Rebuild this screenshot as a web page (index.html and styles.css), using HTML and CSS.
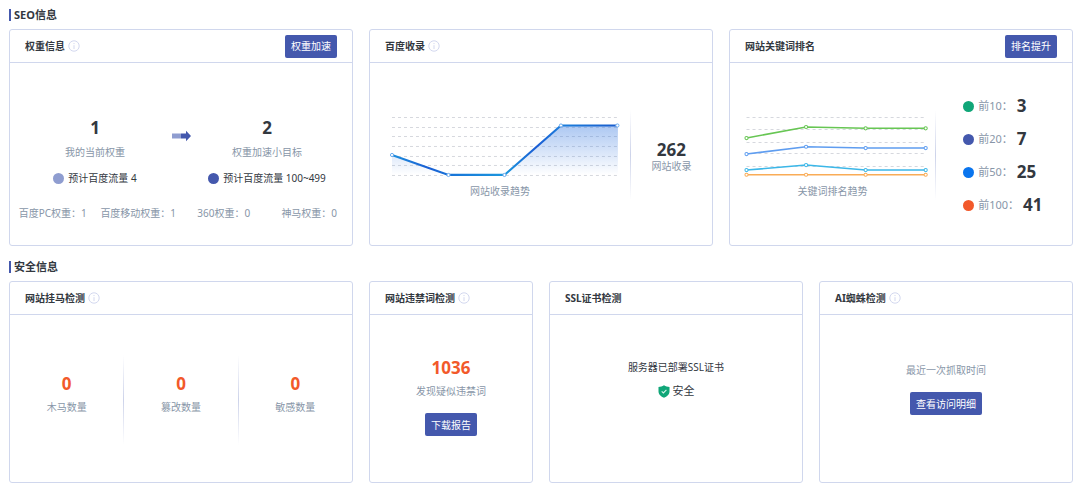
FILE: index.html
```html
<!DOCTYPE html>
<html lang="zh-CN">
<head>
<meta charset="utf-8">
<meta name="viewport" content="width=device-width, initial-scale=1">
<title>SEO信息</title>
<link rel="stylesheet" href="styles.css">
</head>
<body>
<svg class="sprite" aria-hidden="true">
  <symbol id="info" viewBox="0 0 12 12">
    <circle cx="6" cy="6" r="5.2" fill="none" stroke="#d3d8ef"/>
    <path d="M6 5.2V9M6 3v1.1" stroke="#d3d8ef" fill="none"/>
  </symbol>
</svg>
<main class="page">
  <section class="section">
    <h2 class="section-title">SEO信息</h2>
    <div class="cards cards-seo">
      <article class="card span-4">
        <header class="card-head">
          <h3 class="card-title">权重信息</h3>
          <svg class="info"><use href="#info"/></svg>
          <button type="button" class="btn head-btn">权重加速</button>
        </header>
        <div class="card-body weight">
          <div class="compare">
            <div class="compare-col">
              <strong class="num">1</strong>
              <span class="label">我的当前权重</span>
              <span class="flow"><i class="dot dot-light"></i>预计百度流量 4</span>
            </div>
            <svg class="arrow" viewBox="0 0 20 12" aria-hidden="true">
              <path d="M1 3.500h9v5H1z" fill="#8f9dd0"/>
              <path d="M10 3.500h5V.8L20 6 15 11.200V8.500h-5z" fill="#4458ad"/>
            </svg>
            <div class="compare-col">
              <strong class="num">2</strong>
              <span class="label">权重加速小目标</span>
              <span class="flow"><i class="dot dot-indigo"></i>预计百度流量 100~499</span>
            </div>
          </div>
          <div class="weights">
            <span>百度PC权重：1</span>
            <span>百度移动权重：1</span>
            <span>360权重：0</span>
            <span>神马权重：0</span>
          </div>
        </div>
      </article>

      <article class="card span-4">
        <header class="card-head">
          <h3 class="card-title">百度收录</h3>
          <svg class="info"><use href="#info"/></svg>
        </header>
        <div class="card-body trend trend-index">
          <figure class="chart">
            <svg viewBox="0 0 260 70" role="img" aria-label="网站收录趋势">
              <defs>
                <linearGradient id="area" x1="0" y1="0" x2="0" y2="1">
                  <stop offset="0" stop-color="#3a7be0" stop-opacity=".42"/>
                  <stop offset="1" stop-color="#3a7be0" stop-opacity="0"/>
                </linearGradient>
                <linearGradient id="stroke" gradientUnits="userSpaceOnUse" x1="22" y1="0" x2="248" y2="0">
                  <stop offset="0" stop-color="#1c8fdd"/>
                  <stop offset=".16" stop-color="#1a5fd4"/>
                  <stop offset=".25" stop-color="#1873d8"/>
                  <stop offset=".5" stop-color="#1c98de"/>
                  <stop offset=".64" stop-color="#1a5cd4"/>
                  <stop offset=".75" stop-color="#1c7fdc"/>
                  <stop offset="1" stop-color="#1a5ccc"/>
                </linearGradient>
              </defs>
              <path class="grid" d="M22 7.500H248M22 17.500H248M22 26.500H248M22 36.500H248M22 46.500H248M22 55.500H248M22 65.500H248"/>
              <path d="M22 45L78.500 65H134.500L191 15.500H248V65H22z" fill="url(#area)"/>
              <path d="M22 45L78.500 65H134.500L191 15.500H248" fill="none" stroke="url(#stroke)" stroke-width="2.200"/>
              <g class="points" stroke="#6aabee">
                <circle cx="22" cy="45" r="1.600"/><circle cx="78.500" cy="65" r="1.600"/><circle cx="134.500" cy="65" r="1.600"/><circle cx="191" cy="15.500" r="1.600"/><circle cx="247.500" cy="15.500" r="1.600"/>
              </g>
            </svg>
            <figcaption class="label">网站收录趋势</figcaption>
          </figure>
          <i class="rule"></i>
          <div class="total">
            <strong class="num">262</strong>
            <span class="label">网站收录</span>
          </div>
        </div>
      </article>

      <article class="card span-4">
        <header class="card-head">
          <h3 class="card-title">网站关键词排名</h3>
          <button type="button" class="btn head-btn">排名提升</button>
        </header>
        <div class="card-body trend trend-rank">
          <figure class="chart">
            <svg viewBox="0 0 205 70" role="img" aria-label="关键词排名趋势">
              <path class="grid" d="M16.500 7.500H196M16.500 19.500H196M16.500 32.500H196M16.500 43.500H196M16.500 56.500H196"/>
              <g fill="none" stroke-width="1.600">
                <path stroke="#67c653" d="M16.500 28L76 17L135.500 18.300H195.500"/>
                <path stroke="#5f9df0" d="M16.500 44L76 36.700L135.500 38H195.500"/>
                <path stroke="#3bb7e8" d="M16.500 60L76 55L135.500 60H195.500"/>
                <path stroke="#f9ac57" d="M16.500 64.700H195.500"/>
              </g>
              <g class="points">
                <g stroke="#67c653"><circle cx="16.500" cy="28" r="1.600"/><circle cx="76" cy="17" r="1.600"/><circle cx="135.500" cy="18.300" r="1.600"/><circle cx="195.500" cy="18.300" r="1.600"/></g>
                <g stroke="#5f9df0"><circle cx="16.500" cy="44" r="1.600"/><circle cx="76" cy="36.700" r="1.600"/><circle cx="135.500" cy="38" r="1.600"/><circle cx="195.500" cy="38" r="1.600"/></g>
                <g stroke="#3bb7e8"><circle cx="16.500" cy="60" r="1.600"/><circle cx="76" cy="55" r="1.600"/><circle cx="135.500" cy="60" r="1.600"/><circle cx="195.500" cy="60" r="1.600"/></g>
                <g stroke="#f9ac57"><circle cx="16.500" cy="64.700" r="1.600"/><circle cx="76" cy="64.700" r="1.600"/><circle cx="135.500" cy="64.700" r="1.600"/><circle cx="195.500" cy="64.700" r="1.600"/></g>
              </g>
            </svg>
            <figcaption class="label">关键词排名趋势</figcaption>
          </figure>
          <i class="rule"></i>
          <ul class="ranks">
            <li><i class="dot dot-green"></i><span>前10：</span><strong class="num">3</strong></li>
            <li><i class="dot dot-indigo"></i><span>前20：</span><strong class="num">7</strong></li>
            <li><i class="dot dot-blue"></i><span>前50：</span><strong class="num">25</strong></li>
            <li><i class="dot dot-orange"></i><span>前100：</span><strong class="num">41</strong></li>
          </ul>
        </div>
      </article>
    </div>
  </section>

  <section class="section">
    <h2 class="section-title">安全信息</h2>
    <div class="cards cards-safe">
      <article class="card span-4">
        <header class="card-head">
          <h3 class="card-title">网站挂马检测</h3>
          <svg class="info"><use href="#info"/></svg>
        </header>
        <div class="card-body counts">
          <div class="count"><strong class="num alert">0</strong><span class="label">木马数量</span></div>
          <i class="rule"></i>
          <div class="count"><strong class="num alert">0</strong><span class="label">篡改数量</span></div>
          <i class="rule"></i>
          <div class="count"><strong class="num alert">0</strong><span class="label">敏感数量</span></div>
        </div>
      </article>

      <article class="card span-2">
        <header class="card-head">
          <h3 class="card-title">网站违禁词检测</h3>
          <svg class="info"><use href="#info"/></svg>
        </header>
        <div class="card-body stack">
          <strong class="num alert">1036</strong>
          <span class="label">发现疑似违禁词</span>
          <button type="button" class="btn">下载报告</button>
        </div>
      </article>

      <article class="card span-3">
        <header class="card-head">
          <h3 class="card-title">SSL证书检测</h3>
        </header>
        <div class="card-body stack">
          <span class="note">服务器已部署SSL证书</span>
          <span class="safe">
            <svg class="shield" viewBox="0 0 12 13" aria-hidden="true">
              <path d="M6 .3C7.600 1.400 9.500 1.800 11.500 1.900V6.500C11.500 9.600 9 11.600 6 12.700 3 11.600.5 9.600.5 6.500V1.900C2.500 1.800 4.400 1.400 6 .3z" fill="#10a678"/>
              <path d="M3.700 6.400L5.400 8 8.400 4.900" fill="none" stroke="#d8f5ea" stroke-width="1.100"/>
            </svg>安全
          </span>
        </div>
      </article>

      <article class="card span-3">
        <header class="card-head">
          <h3 class="card-title">AI蜘蛛检测</h3>
          <svg class="info"><use href="#info"/></svg>
        </header>
        <div class="card-body stack">
          <span class="label">最近一次抓取时间</span>
          <button type="button" class="btn">查看访问明细</button>
        </div>
      </article>
    </div>
  </section>
</main>
</body>
</html>
```
FILE: styles.css
```css
* {
  box-sizing: border-box;
}

body {
  margin: 0;
  background: #fff;
  color: #33383f;
  font: 10px/16px "Noto Sans", "Noto Sans CJK SC", sans-serif;
}

h2, h3, ul, figure {
  margin: 0;
  padding: 0;
}

.sprite {
  display: none;
}

.page {
  padding: 7px 7px 5px 9px;
}

.section + .section {
  margin-top: 13px;
}

.section-title {
  display: flex;
  align-items: center;
  gap: 3px;
  margin-bottom: 6px;
  font-size: 11px;
  line-height: 16px;
  font-weight: 700;
}

.section-title::before {
  content: "";
  width: 2px;
  height: 12px;
  background: #4458ad;
}

.cards {
  display: grid;
  grid-template-columns: repeat(12, minmax(0, 1fr));
  gap: 16px;
}

.cards-seo {
  grid-auto-rows: minmax(217px, auto);
}

.cards-safe {
  grid-auto-rows: minmax(202px, auto);
}

.span-2 { grid-column: span 2; }
.span-3 { grid-column: span 3; }
.span-4 { grid-column: span 4; }

.card {
  display: flex;
  flex-direction: column;
  border: 1px solid #d0d7ed;
  border-radius: 3px;
}

.card-head {
  display: flex;
  align-items: center;
  gap: 3px;
  height: 33px;
  padding: 0 15px;
  border-bottom: 1px solid #d0d7ed;
}

.card-title {
  font-size: 10px;
  font-weight: 700;
  white-space: nowrap;
}

.info {
  flex: none;
  width: 12px;
  height: 12px;
}

.btn {
  height: 23px;
  padding: 0 6px;
  border: 0;
  border-radius: 2px;
  background: #4458ad;
  color: #fff;
  font: inherit;
  white-space: nowrap;
  cursor: pointer;
}

.head-btn {
  margin-left: auto;
}

.card-body {
  flex: 1;
}

.num {
  font-size: 17px;
  line-height: 24px;
  font-weight: 700;
}

.alert {
  color: #f2592a;
}

.label {
  color: #8896a8;
}

.dot {
  flex: none;
  width: 11px;
  height: 11px;
  border-radius: 50%;
}

.dot-light { background: #8f9dd0; }
.dot-indigo { background: #4458ad; }
.dot-green { background: #10a678; }
.dot-blue { background: #0a75ee; }
.dot-orange { background: #f2592a; }

.rule {
  flex: none;
  width: 1px;
  height: 90px;
  background: linear-gradient(#fff, #cdd3ea, #fff);
}

/* weight card */
.weight {
  padding-top: 53px;
}

.compare {
  display: flex;
  padding: 0 9px;
}

.compare-col {
  flex: 1;
  display: flex;
  flex-direction: column;
  align-items: center;
  white-space: nowrap;
}

.compare-col .label {
  margin-top: 4px;
}

.arrow {
  flex: none;
  width: 20px;
  height: 12px;
  margin-top: 14px;
}

.flow {
  display: flex;
  align-items: center;
  gap: 4px;
  margin-top: 10px;
}

.weights {
  display: grid;
  grid-template-columns: repeat(4, 1fr);
  margin-top: 19px;
  color: #8896a8;
  text-align: center;
  white-space: nowrap;
}

/* chart cards */
.trend {
  display: flex;
  align-items: flex-start;
  padding-top: 47px;
}

.chart {
  flex: none;
  text-align: center;
}

.chart svg {
  display: block;
  width: 100%;
  margin-bottom: 3px;
}

.trend-index .chart { width: 76%; }
.trend-rank .chart { width: 60%; }

.grid {
  fill: none;
  stroke: #d6d8de;
  stroke-dasharray: 3 3;
}

.points {
  fill: #fff;
}

.total {
  flex: 1;
  display: flex;
  flex-direction: column;
  align-items: center;
  padding-top: 28px;
}

.total .label {
  margin-top: -4px;
}

.ranks {
  flex: 1;
  display: grid;
  gap: 9px;
  margin-top: -16px;
  padding-left: 27px;
  list-style: none;
}

.ranks li {
  display: flex;
  align-items: center;
  gap: 4px;
  color: #8896a8;
  font-size: 11px;
  white-space: nowrap;
}

.ranks .num {
  color: #33383f;
}

/* security cards */
.counts {
  display: flex;
  padding-top: 40px;
}

.count {
  flex: 1;
  display: flex;
  flex-direction: column;
  align-items: center;
  gap: 3px;
  padding-top: 17px;
}

.stack {
  display: flex;
  flex-direction: column;
  align-items: center;
  padding-top: 44px;
}

.stack .num {
  margin-top: -3px;
}

.stack .label {
  margin-top: 3px;
}

.stack .btn {
  margin-top: 14px;
}

.safe {
  display: flex;
  align-items: center;
  gap: 3px;
  margin-top: 8px;
  font-size: 11px;
}

.shield {
  width: 12px;
  height: 13px;
}
```
